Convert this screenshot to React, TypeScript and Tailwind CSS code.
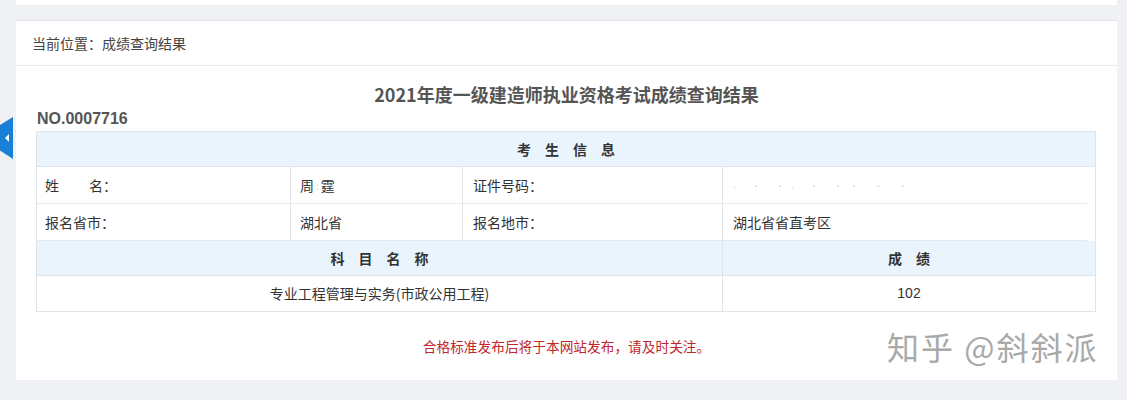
import React from "react";

const font = { fontFamily: '"Noto Sans CJK SC", "Noto Sans", sans-serif' };
const arial = { fontFamily: '"Liberation Sans", "Noto Sans CJK SC", sans-serif' };

export default function App() {
  const cell = "h-[36px] flex items-center text-[14px] text-[#333] border-r border-[#e1e5ea]";
  const th = "flex items-center justify-center text-[14px] font-bold text-[#333] tracking-[14px] pl-[14px]";
  return (
    <div className="relative w-[1127px] h-[400px] overflow-hidden bg-[#f0f1f4]" style={font}>
      <div className="ml-4 w-[1101px] h-[5px] bg-white" />
      <div className="ml-4 mt-[15px] w-[1101px] h-[360px] bg-white border-t border-[#e3e5e9]">
        <div className="h-[45px] border-b border-[#e6e8eb] flex items-center pl-4 text-[14px] text-[#444]">
          当前位置：成绩查询结果
        </div>
        <div className="px-5">
          <div className="mt-[15px] h-[26px] flex items-center justify-center text-[18px] font-bold text-[#555]">
            2021年度一级建造师执业资格考试成绩查询结果
          </div>
          <div className="mt-[3px] h-[18px] flex items-center pl-[1px] text-[16px] font-bold text-[#555]" style={arial}>
            NO.0007716
          </div>
          <div className="mt-[3px] w-[1060px] border border-[#dfe4ea]">
            <div className={th + " h-[35px] bg-[#eaf4fd] border-b border-[#dfe4ea]"}>考生信息</div>
            <div className="flex border-b border-[#e4e7eb] mr-[8px]">
              <div className={cell + " w-[254px] pl-[8px]"}>姓<span className="inline-block w-[30px]" />名：</div>
              <div className={cell + " w-[172px] pl-[9px]"}>周<span className="text-[#ccc] text-[10px] mx-[2px]">:</span>霆</div>
              <div className={cell + " w-[260px] pl-[10px]"}>证件号码：</div>
              <div className="h-[36px] flex-1 flex items-center pl-[10px] text-[10px] text-[#ddd] tracking-[6px]">- · ·- · ·· · ·</div>
            </div>
            <div className="flex border-b border-[#e4e7eb] mr-[8px]">
              <div className={cell + " w-[254px] pl-[8px]"}>报名省市：</div>
              <div className={cell + " w-[172px] pl-[9px]"}>湖北省</div>
              <div className={cell + " w-[260px] pl-[10px]"}>报名地市：</div>
              <div className="h-[36px] flex-1 flex items-center pl-[10px] text-[14px] text-[#333]">湖北省省直考区</div>
            </div>
            <div className="flex h-[35px] bg-[#eaf4fd] border-b border-[#dfe4ea]">
              <div className={th + " w-[686px] border-r border-[#dfe4ea]"}>科目名称</div>
              <div className={th + " flex-1"}>成绩</div>
            </div>
            <div className="flex h-[35px]">
              <div className="w-[686px] border-r border-[#dfe4ea] flex items-center justify-center text-[14px] text-[#333]">专业工程管理与实务(市政公用工程)</div>
              <div className="flex-1 flex items-center justify-center text-[14px] text-[#333]" style={arial}>102</div>
            </div>
          </div>
          <div className="mt-[24px] flex justify-center text-[13.7px] text-[#c0262d]">
            合格标准发布后将于本网站发布，请及时关注。
          </div>
        </div>
      </div>
      <div
        className="absolute left-0 top-[117px] w-[13px] h-[42px] bg-[#1a7fd6] flex items-center justify-center"
        style={{ clipPath: "polygon(0 19%, 100% 0, 100% 100%, 0 80%)" }}
      >
        <svg width="6" height="8" viewBox="0 0 6 8">
          <polygon points="5,0 5,8 1,4" fill="#fff" />
        </svg>
      </div>
      <div
        className="absolute left-[887px] top-[326px] text-[32px] text-[#a9a9a9] whitespace-nowrap leading-[40px] tracking-[2px]"
        style={{ textShadow: "1px 1px 0 #fff, -1px -1px 0 #fff, 1px -1px 0 #fff, -1px 1px 0 #fff" }}
      >
        知乎 @斜斜派
      </div>
    </div>
  );
}
